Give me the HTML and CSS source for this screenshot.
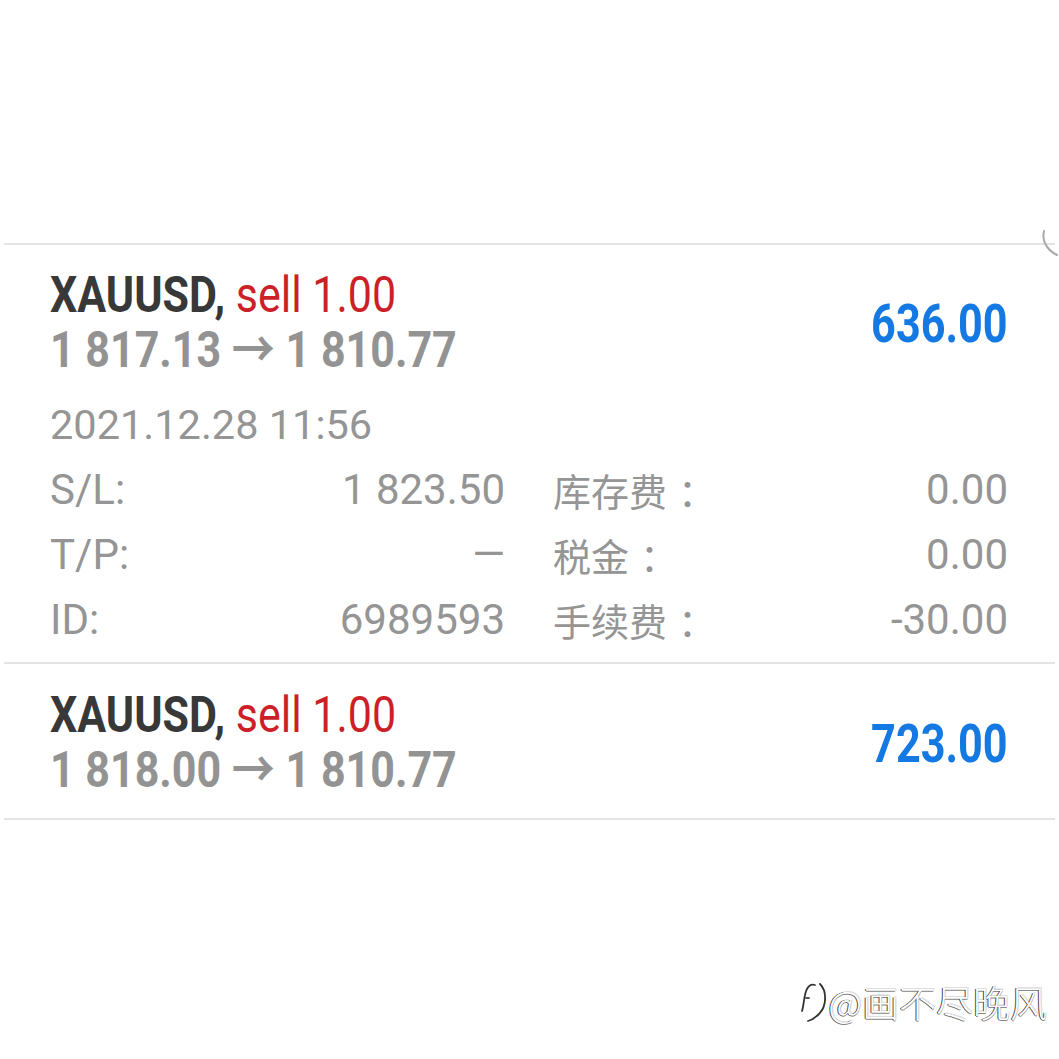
FILE: index.html
```html
<!DOCTYPE html>
<html lang="zh-CN">
<head>
<meta charset="UTF-8" />
<meta name="viewport" content="width=device-width, initial-scale=1" />
<title>持仓历史</title>
<link rel="stylesheet" href="styles.css">
</head>
<body>

<div class="screen">
  <svg class="refresh" width="20" height="30" viewBox="0 0 20 30">
    <path d="M3 2 C1 10 4 20 16 26" fill="none" stroke="#a8a8a8" stroke-width="2" stroke-linecap="round"/>
  </svg>

  <div class="list">
    <div class="order">
      <div class="order-head">
        <div class="order-info">
          <div class="title"><span class="narrow">XAUUSD, <span class="sell">sell 1.00</span></span></div>
          <div class="price"><span class="narrow">1 817.13 → 1 810.77</span></div>
        </div>
        <div class="profit"><span class="narrow">636.00</span></div>
      </div>
      <div class="details">
        <div class="date">2021.12.28 11:56</div>
        <div class="field"><span>S/L:</span><span>1 823.50</span></div>
        <div class="field"><span class="cn">库存费<span class="colon">：</span></span><span>0.00</span></div>
        <div class="field"><span>T/P:</span><span>—</span></div>
        <div class="field"><span class="cn">税金<span class="colon">：</span></span><span>0.00</span></div>
        <div class="field"><span>ID:</span><span>6989593</span></div>
        <div class="field"><span class="cn">手续费<span class="colon">：</span></span><span>-30.00</span></div>
      </div>
    </div>

    <div class="order order-short">
      <div class="order-head">
        <div class="order-info">
          <div class="title"><span class="narrow">XAUUSD, <span class="sell">sell 1.00</span></span></div>
          <div class="price"><span class="narrow">1 818.00 → 1 810.77</span></div>
        </div>
        <div class="profit"><span class="narrow">723.00</span></div>
      </div>
    </div>
  </div>

  <div class="watermark">
    <svg class="wm-logo" width="30" height="44" viewBox="0 0 30 44">
      <g fill="none" stroke-linecap="round">
        <path d="M3 31 C5 25 5 14 8 9 C10 5 13 4 16 5" stroke="#fff" stroke-width="4"/>
        <path d="M2 31 C4 25 4 14 7 9 C9 5 12 4 15 5" stroke="#333" stroke-width="1.8"/>
        <path d="M6 18 L9 18" stroke="#555" stroke-width="1.8"/>
        <path d="M21 4 C28 11 28 26 20 34 C16 38 13 40 9 41" stroke="#fff" stroke-width="4"/>
        <path d="M20 4 C27 11 27 26 19 34 C15 38 12 40 8 41" stroke="#333" stroke-width="1.8"/>
      </g>
    </svg>
    <span>@画不尽晚风</span>
  </div>
</div>

</body>
</html>
```

FILE: styles.css
```css
body {
  margin: 0;
  background: #fff;
  font-family: Roboto, "Noto Sans CJK SC", sans-serif;
}
.screen {
  position: relative;
  width: 1059px;
  height: 1059px;
  padding-top: 243px;
  box-sizing: border-box;
  overflow: hidden;
}
.refresh {
  position: absolute;
  top: 229px;
  left: 1041px;
}
.list {
  margin: 0 4px;
  border-top: 2px solid #e4e4e4;
}
.order {
  padding: 23px 47px 10px 46px;
  border-bottom: 2px solid #e4e4e4;
}
.order-short {
  padding-top: 24px;
  padding-bottom: 20px;
}
.order-head {
  display: flex;
  justify-content: space-between;
  align-items: center;
}
.title, .price {
  font-size: 50px;
  line-height: 55px;
  font-weight: 700;
  white-space: nowrap;
}
.title { color: #383838; }
.sell { color: #cc1f27; font-weight: 400; }
.price { color: #939393; }
.narrow {
  display: inline-block;
  transform: scaleX(.86);
  transform-origin: 0 50%;
}
.profit {
  font-size: 54px;
  font-weight: 700;
  color: #1479e2;
}
.profit .narrow {
  transform: scaleX(.8);
  transform-origin: 100% 50%;
}
.details {
  margin-top: 14px;
  display: grid;
  grid-template-columns: 1fr 1fr;
  column-gap: 48px;
  font-size: 42px;
  line-height: 65px;
  color: #959595;
}
.date {
  grid-column: 1 / 3;
  font-size: 41.5px;
}
.field {
  display: flex;
  justify-content: space-between;
}
.cn {
  font-family: "Noto Sans CJK SC", sans-serif;
  font-size: 38px;
}
.colon {
  padding-left: 11px;
}
.watermark {
  position: absolute;
  right: 12px;
  top: 980px;
  display: flex;
  align-items: center;
  font-family: "Noto Sans CJK SC", sans-serif;
  font-weight: 300;
  font-size: 37px;
  line-height: 44px;
  color: #fff;
  text-shadow: -1px 0 0 #444, 0 1px 0 #888, 1px -1px 0 #ddd;
}
.wm-logo {
  margin-right: -2px;
}
```
